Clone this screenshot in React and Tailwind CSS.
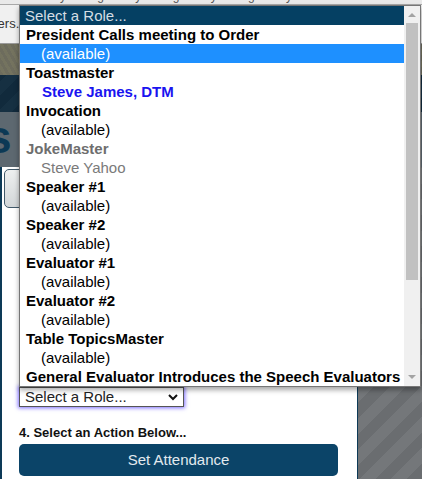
import React from "react";

const rows = [
  { t: "Select a Role...", k: "header" },
  { t: "President Calls meeting to Order", k: "group" },
  { t: "(available)", k: "hl" },
  { t: "Toastmaster", k: "group" },
  { t: "Steve James, DTM", k: "blue" },
  { t: "Invocation", k: "group" },
  { t: "(available)", k: "opt" },
  { t: "JokeMaster", k: "groupGray" },
  { t: "Steve Yahoo", k: "optGray" },
  { t: "Speaker #1", k: "group" },
  { t: "(available)", k: "opt" },
  { t: "Speaker #2", k: "group" },
  { t: "(available)", k: "opt" },
  { t: "Evaluator #1", k: "group" },
  { t: "(available)", k: "opt" },
  { t: "Evaluator #2", k: "group" },
  { t: "(available)", k: "opt" },
  { t: "Table TopicsMaster", k: "group" },
  { t: "(available)", k: "opt" },
  { t: "General Evaluator Introduces the Speech Evaluators", k: "group" },
];

function Row({ t, k }) {
  if (k === "header")
    return (
      <div className="h-[19px] leading-[19px] pl-[5px] bg-[#054063] text-[#d4dde3] whitespace-nowrap">
        {t}
      </div>
    );
  if (k === "hl")
    return (
      <div className="h-[19px] leading-[19px] pl-[21px] bg-[#1e90ff] text-white whitespace-nowrap">
        {t}
      </div>
    );
  if (k === "group")
    return (
      <div className="h-[19px] leading-[19px] pl-[6px] font-bold text-black whitespace-nowrap">
        {t}
      </div>
    );
  if (k === "groupGray")
    return (
      <div className="h-[19px] leading-[19px] pl-[6px] font-bold text-[#6e6e6e] whitespace-nowrap">
        {t}
      </div>
    );
  if (k === "blue")
    return (
      <div className="h-[19px] leading-[19px] pl-[22px] font-bold text-[#1a14f0] whitespace-nowrap">
        {t}
      </div>
    );
  if (k === "optGray")
    return (
      <div className="h-[19px] leading-[19px] pl-[21px] text-[#7a7a7a] whitespace-nowrap">
        {t}
      </div>
    );
  return (
    <div className="h-[19px] leading-[19px] pl-[21px] text-black whitespace-nowrap">
      {t}
    </div>
  );
}

export default function App() {
  return (
    <div className="relative w-[422px] h-[479px] overflow-hidden font-['Liberation_Sans',Arial,sans-serif] bg-[#6c6f72]">
      {/* browser strip */}
      <div className="h-[5px] bg-[#e9e9e9] border-b border-[#a8a8a8] overflow-hidden">
        <div className="mt-[-10px] ml-[60px] text-[12px] leading-[12px] text-[#555] whitespace-nowrap tracking-[14px]">
          y g y g y g y
        </div>
      </div>
      {/* toolbar */}
      <div className="h-[39px] bg-[#f0f0f0] border-b border-[#9a9a9a] flex items-center">
        <span className="ml-[-6px] text-[13px] text-[#333]">ters.</span>
      </div>
      {/* olive image strip */}
      <div className="h-[31px] bg-[repeating-linear-gradient(60deg,#6d6c5d_0px,#6d6c5d_3px,#74735f_3px,#74735f_6px)]" />
      {/* navy strip */}
      <div className="h-[37px] bg-[repeating-linear-gradient(-45deg,#112a3c_0px,#112a3c_10px,#163042_10px,#163042_20px)]" />
      {/* gray section */}
      <div className="bg-[repeating-linear-gradient(-45deg,#6a6d70_0px,#6a6d70_11px,#74777a_11px,#74777a_22px)] h-[367px] flex flex-col">
        <div className="h-[55px] bg-[#5d6870] overflow-hidden flex items-center">
          <span className="ml-[-14px] mt-[-6px] text-[46px] font-bold leading-none text-[#0c3955]">
            s
          </span>
        </div>
        <div className="w-[358px] flex-1 bg-white border-l-2 border-r border-[#0d3a57] flex flex-col">
          <div className="mt-[2px] ml-[2px] h-[39px] w-[300px] rounded-[5px] border border-[#41596a] bg-[linear-gradient(#eef0f0,#d2d6d8)]" />
          <div className="mt-[179px] ml-[17px] w-[165px] h-[20px] border border-[#555] bg-white shadow-[0_0_4px_1px_#7c6cff] flex items-center justify-between pl-[5px] pr-[5px]">
            <span className="text-[15px] leading-[18px] text-[#222]">Select a Role...</span>
            <svg width="10" height="7" viewBox="0 0 10 7">
              <path d="M1 1 L5 5 L9 1" fill="none" stroke="#111" strokeWidth="2" />
            </svg>
          </div>
          <div className="mt-[18px] ml-[17px] text-[13px] leading-[16px] font-bold text-[#111]">
            4. Select an Action Below...
          </div>
          <div className="mt-[3px] ml-[17px] w-[319px] h-[32px] rounded-[5px] bg-[#0b4468] flex items-center justify-center text-[15px] text-[#e2eaef]">
            Set Attendance
          </div>
        </div>
      </div>

      {/* open dropdown list */}
      <div className="absolute left-[19px] top-[5px] w-[402px] h-[382px] border border-[#767676] bg-white shadow-[0_3px_5px_rgba(0,0,0,0.35)] flex text-[15px]">
        <div className="w-[384px] overflow-hidden">
          {rows.map((r, i) => (
            <Row key={i} {...r} />
          ))}
        </div>
        <div className="w-[16px] bg-[#f0f0f0] flex flex-col items-center">
          <div className="h-[17px] flex items-center justify-center">
            <svg width="8" height="5" viewBox="0 0 8 5">
              <path d="M0 5 L4 1 L8 5 Z" fill="#a3a3a3" />
            </svg>
          </div>
          <div className="w-[12px] h-[257px] bg-[#c1c1c1]" />
          <div className="flex-1" />
          <div className="h-[17px] flex items-center justify-center">
            <svg width="8" height="5" viewBox="0 0 8 5">
              <path d="M0 0 L4 4 L8 0 Z" fill="#a3a3a3" />
            </svg>
          </div>
        </div>
      </div>
    </div>
  );
}
